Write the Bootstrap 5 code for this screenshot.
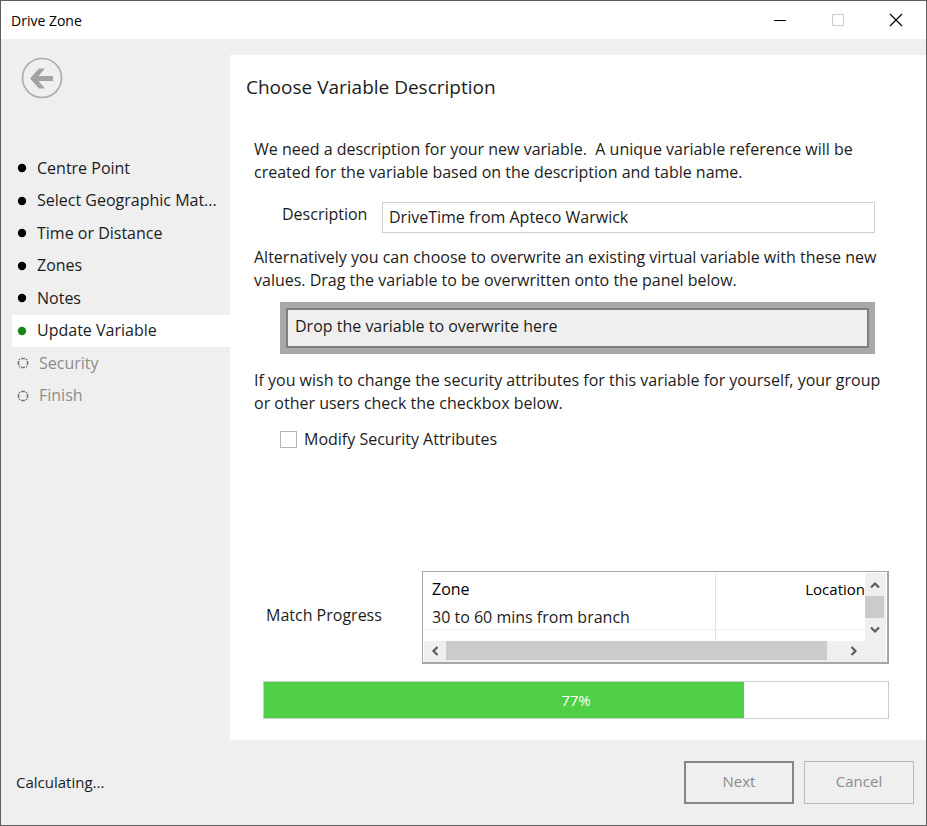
<!DOCTYPE html>
<html lang="en">
<head>
<meta charset="utf-8">
<meta name="viewport" content="width=device-width, initial-scale=1">
<title>Drive Zone</title>
<link href="https://cdn.jsdelivr.net/npm/bootstrap@5.3.0/dist/css/bootstrap.min.css" rel="stylesheet">
<style>
  :root { --face: #efefef; --ink: #1c1c1c; --muted: #8c8c8c; }
  body { font-family: "Open Sans", "Noto Sans", sans-serif; font-size: 16px; line-height: 23px; color: var(--ink); background: var(--face); }
  .window { min-height: 100vh; border: 1px solid #5e5e5e; }
  .titlebar { height: 38px; padding: 0 1px 0 10px; color: #000; }
  .titlebar .caption { font-size: 14px; }
  .win-btn { width: 58px; height: 36px; padding: 0; border: 0; background: none; color: #000; }
  .win-btn svg { display: block; margin: auto; }
  .win-btn:disabled { color: #cacaca; }
  .sidebar { width: 229px; padding-left: 11px; }
  .back-btn { width: 42px; height: 42px; margin: 18px 0 53px 9px; padding: 0; border: 0; background: none; }
  .steps { height: 260px; }
  .step { padding-left: 5px; gap: 10px; color: var(--ink); text-decoration: none; min-width: 0; }
  .step.current { background: #fff; }
  .step.pending { color: var(--muted); }
  .pane { margin-top: 16px; padding: 19px 37px 21px 16px; }
  .pane h1 { font-size: 19px; line-height: 26px; font-weight: 400; margin: 0 0 38px; }
  .indent { padding-left: 8px; }
  .indent p { margin: 0; white-space: nowrap; }
  .fields { padding-left: 26px; padding-right: 14px; }
  .name-row { margin: 18px 0 13px; }
  .drop-row { padding-top: 10px; padding-bottom: 15px; }
  .name-label { width: 102px; padding: 1px 0 0 2px; }
  .form-control.name-box { height: 31px; padding: 0 6px 2px; border: 1px solid #d0d0d0; border-radius: 0; font-size: 16px; color: var(--ink); }
  .drop-zone { border: 6px solid #a9a9a9; }
  .drop-zone div { height: 40px; border: 2px solid #7f7f7f; background: var(--face); padding: 5px 7px; }
  .form-check-input.sec-check { width: 17px; height: 17px; margin: 0; border: 1px solid #b4b4b4; border-radius: 0; }
  .check-row { gap: 7px; padding-top: 13px; }
  .match { padding-left: 17px; }
  .match-label { width: 159px; padding: 0 0 5px 3px; }
  .listbox { height: 93px; border: 2px solid #a5a6ab; border-width: 1px 2px 2px 1px; padding: 1px; grid-template: 1fr 21px / 1fr 21px; min-width: 0; }
  .grid-view { overflow: hidden; min-width: 0; }
  .grid-view table { width: 100%; table-layout: fixed; border-collapse: separate; border-spacing: 0; }
  .grid-view th, .grid-view td { padding: 2px 8px 0; font-weight: 400; white-space: nowrap; }
  .grid-view th:first-child, .grid-view td:first-child { border-right: 1px solid #e4e4e4; }
  .grid-view th { height: 31px; color: #000; }
  .grid-view th:last-child { padding-right: 0; font-size: 15px; }
  .grid-view td { height: 26px; border-bottom: 1px solid #efefef; }
  .grid-view .stub td { height: 11px; border-bottom: 0; }
  .grid-view .zone-col { width: 292px; }
  .bar { background: var(--face); }
  .bar button { border: 0; padding: 0; background: none; display: flex; align-items: center; justify-content: center; }
  .vbar button { width: 19px; height: 23px; }
  .vbar span { width: 19px; height: 22px; background: #cbcbcb; }
  .hbar button { width: 22px; height: 19px; }
  .hbar span { width: 96%; height: 19px; background: #cbcbcb; }
  .progress.match-bar { height: 38px; margin-top: 17px; border: 1px solid #cdcdcd; border-radius: 0; background: #fff; }
  .match-bar .progress-bar { background: #4fcf45; }
  .match-bar .pct { color: #fff; font-size: 15px; }
  .footbar { height: 85px; padding: 0 12px 0 15px; gap: 10px; }
  .footbar .status { font-size: 15px; }
  .btn.wiz { width: 110px; height: 43px; padding: 0 0 2px; border-radius: 0; border: 1px solid #b9b9b9; font-size: 15px; color: var(--muted); background: var(--face); opacity: 1; }
  .btn.wiz.primary { border: 2px solid #858585; }
</style>
<script src="https://cdn.jsdelivr.net/npm/bootstrap@5.3.0/dist/js/bootstrap.bundle.min.js"></script>
</head>
<body>
<div class="window d-flex flex-column">
  <header class="titlebar bg-white d-flex align-items-center">
    <span class="caption me-auto">Drive Zone</span>
    <button class="win-btn" type="button" aria-label="Minimize"><svg width="14" height="14" viewBox="0 0 14 14"><path d="M1 7.500H13" stroke="currentColor"/></svg></button>
    <button class="win-btn" type="button" aria-label="Maximize" disabled><svg width="14" height="14" viewBox="0 0 14 14"><path d="M1.500 1.500H12.500V12.500H1.500Z" fill="none" stroke="currentColor"/></svg></button>
    <button class="win-btn" type="button" aria-label="Close"><svg width="14" height="14" viewBox="0 0 14 14"><path d="M1 1L13 13M13 1L1 13" stroke="currentColor" stroke-width="1.200"/></svg></button>
  </header>

  <div class="d-flex flex-grow-1">
    <nav class="sidebar flex-shrink-0" aria-label="Wizard steps">
      <button class="back-btn d-block" type="button" aria-label="Back"><svg class="d-block" width="42" height="42" viewBox="0 0 42 42"><circle cx="21" cy="21" r="19.500" fill="none" stroke="#adadad" stroke-width="1.700"/><path d="M9 21.500L18 11.500H24L17.500 19H32V24H17.500L24 31.500H18Z" fill="#a3a3a3"/></svg></button>
      <div class="steps d-flex flex-column">
        <a class="step d-flex align-items-center flex-fill" href="#"><svg class="flex-shrink-0" width="10" height="10"><circle cx="5" cy="5" r="4.200"/></svg><span>Centre Point</span></a>
        <a class="step d-flex align-items-center flex-fill" href="#"><svg class="flex-shrink-0" width="10" height="10"><circle cx="5" cy="5" r="4.200"/></svg><span>Select Geographic Mat...</span></a>
        <a class="step d-flex align-items-center flex-fill" href="#"><svg class="flex-shrink-0" width="10" height="10"><circle cx="5" cy="5" r="4.200"/></svg><span>Time or Distance</span></a>
        <a class="step d-flex align-items-center flex-fill" href="#"><svg class="flex-shrink-0" width="10" height="10"><circle cx="5" cy="5" r="4.200"/></svg><span>Zones</span></a>
        <a class="step d-flex align-items-center flex-fill" href="#"><svg class="flex-shrink-0" width="10" height="10"><circle cx="5" cy="5" r="4.200"/></svg><span>Notes</span></a>
        <a class="step current d-flex align-items-center flex-fill" href="#" aria-current="step"><svg class="flex-shrink-0" width="10" height="10"><circle cx="5" cy="5" r="4.200" fill="#1c8414"/></svg><span>Update Variable</span></a>
        <a class="step pending d-flex align-items-center flex-fill" href="#"><svg class="flex-shrink-0" width="12" height="12" viewBox="0 0 12 12"><path d="M4 1.500H8M4 10.500H8M1.500 4V8M10.500 4V8M2 3L3 2M9 2L10 3M10 9L9 10M3 10L2 9" fill="none" stroke="#777" stroke-width="1.600"/></svg><span>Security</span></a>
        <a class="step pending d-flex align-items-center flex-fill" href="#"><svg class="flex-shrink-0" width="12" height="12" viewBox="0 0 12 12"><path d="M4 1.500H8M4 10.500H8M1.500 4V8M10.500 4V8M2 3L3 2M9 2L10 3M10 9L9 10M3 10L2 9" fill="none" stroke="#777" stroke-width="1.600"/></svg><span>Finish</span></a>
      </div>
    </nav>

    <main class="pane bg-white flex-grow-1 d-flex flex-column">
      <h1>Choose Variable Description</h1>
      <div class="indent">
        <p>We need a description for your new variable.&nbsp; A unique variable reference will be<br>created for the variable based on the description and table name.</p>
        <div class="fields name-row d-flex">
          <label class="name-label flex-shrink-0" for="desc">Description</label>
          <input class="form-control name-box" id="desc" type="text" value="DriveTime from Apteco Warwick">
        </div>
        <p>Alternatively you can choose to overwrite an existing virtual variable with these new<br>values. Drag the variable to be overwritten onto the panel below.</p>
        <div class="fields drop-row"><div class="drop-zone"><div>Drop the variable to overwrite here</div></div></div>
        <p>If you wish to change the security attributes for this variable for yourself, your group<br>or other users check the checkbox below.</p>
        <div class="fields check-row d-flex align-items-center">
          <input class="form-check-input sec-check" id="sec" type="checkbox">
          <label for="sec">Modify Security Attributes</label>
        </div>
      </div>

      <section class="match mt-auto">
        <div class="d-flex align-items-center">
          <div class="match-label flex-shrink-0">Match Progress</div>
          <div class="listbox d-grid flex-grow-1">
            <div class="grid-view">
              <table>
                <thead><tr><th class="zone-col" scope="col">Zone</th><th class="text-end" scope="col">Location</th></tr></thead>
                <tbody><tr><td>30 to 60 mins from branch</td><td></td></tr><tr class="stub"><td></td><td></td></tr></tbody>
              </table>
            </div>
            <div class="bar vbar d-flex flex-column">
              <button type="button" aria-label="Scroll up"><svg width="10" height="8" viewBox="0 0 10 8"><path d="M1 6.500L5 2.500L9 6.500" fill="none" stroke="#5c5c5c" stroke-width="2.200"/></svg></button>
              <span></span>
              <button type="button" aria-label="Scroll down"><svg width="10" height="8" viewBox="0 0 10 8"><path d="M1 1.500L5 5.500L9 1.500" fill="none" stroke="#5c5c5c" stroke-width="2.200"/></svg></button>
            </div>
            <div class="bar hbar d-flex">
              <button class="flex-shrink-0" type="button" aria-label="Scroll left"><svg width="8" height="10" viewBox="0 0 8 10"><path d="M6.500 1L2.500 5L6.500 9" fill="none" stroke="#5c5c5c" stroke-width="2.200"/></svg></button>
              <div class="flex-grow-1"><span class="d-block"></span></div>
              <button class="flex-shrink-0" type="button" aria-label="Scroll right"><svg width="8" height="10" viewBox="0 0 8 10"><path d="M1.500 1L5.500 5L1.500 9" fill="none" stroke="#5c5c5c" stroke-width="2.200"/></svg></button>
            </div>
            <div class="bar"></div>
          </div>
        </div>
        <div class="progress match-bar position-relative" role="progressbar" aria-label="Match progress" aria-valuenow="77" aria-valuemin="0" aria-valuemax="100">
          <div class="progress-bar" style="width: 77%"></div>
          <span class="pct position-absolute top-50 start-50 translate-middle">77%</span>
        </div>
      </section>
    </main>
  </div>

  <footer class="footbar d-flex align-items-center">
    <span class="status me-auto" role="status">Calculating...</span>
    <button class="btn wiz primary" type="button" disabled>Next</button>
    <button class="btn wiz" type="button" disabled>Cancel</button>
  </footer>
</div>
</body>
</html>
